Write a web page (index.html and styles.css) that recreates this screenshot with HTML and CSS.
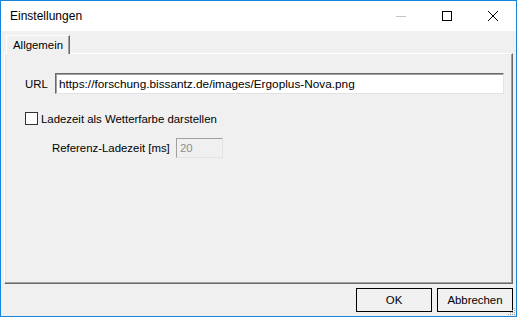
FILE: index.html
```html
<!DOCTYPE html>
<html lang="de">
  <head>
    <meta charset="UTF-8" />
    <title>Einstellungen</title>
    <link rel="stylesheet" href="styles.css">
  </head>
  <body>
    <div class="window">
      <!-- Titelleiste -->
      <div class="titlebar">
        <span class="title">Einstellungen</span>
        <div class="controls">
          <span class="ctl">
            <svg width="10" height="10" viewBox="0 0 10 10"><path d="M0 5.5h10" stroke="#c4c4c4" stroke-width="1"/></svg>
          </span>
          <span class="ctl">
            <svg width="10" height="10" viewBox="0 0 10 10"><rect x="0.5" y="0.5" width="9" height="9" fill="none" stroke="#000" stroke-width="1"/></svg>
          </span>
          <span class="ctl">
            <svg width="10" height="10" viewBox="0 0 10 10"><path d="M0 0L10 10M10 0L0 10" stroke="#000" stroke-width="1"/></svg>
          </span>
        </div>
      </div>

      <div class="content">
        <div class="tabs">
          <span class="tab">Allgemein</span>
        </div>

        <div class="panel">
          <div class="row url-row">
            <label class="lbl">URL</label>
            <input class="field url" type="text" value="https://forschung.bissantz.de/images/Ergoplus-Nova.png">
          </div>

          <div class="row check-row">
            <span class="checkbox"></span>
            <span>Ladezeit als Wetterfarbe darstellen</span>
          </div>

          <div class="row ref-row">
            <span class="lbl">Referenz-Ladezeit [ms]</span>
            <input class="field small" type="text" value="20" disabled>
          </div>
        </div>

        <div class="buttons">
          <button class="btn">OK</button>
          <button class="btn">Abbrechen</button>
        </div>
      </div>

      <svg class="grip" width="10" height="10" viewBox="0 0 10 10">
        <rect x="8" y="2" width="1" height="1" fill="#a0a0a0"/>
        <rect x="6" y="4" width="1" height="1" fill="#a0a0a0"/>
        <rect x="8" y="4" width="1" height="1" fill="#a0a0a0"/>
        <rect x="4" y="6" width="1" height="1" fill="#a0a0a0"/>
        <rect x="6" y="6" width="1" height="1" fill="#a0a0a0"/>
        <rect x="8" y="6" width="1" height="1" fill="#a0a0a0"/>
        <rect x="2" y="8" width="1" height="1" fill="#a0a0a0"/>
        <rect x="4" y="8" width="1" height="1" fill="#a0a0a0"/>
        <rect x="6" y="8" width="1" height="1" fill="#a0a0a0"/>
        <rect x="8" y="8" width="1" height="1" fill="#a0a0a0"/>
      </svg>
    </div>
  </body>
</html>
```

FILE: styles.css
```css
html,
body {
  margin: 0;
  padding: 0;
  overflow: hidden;
}

body {
  font-family: "Liberation Sans", Arial, sans-serif;
  font-size: 11.4px;
  color: #000;
}

.window {
  position: relative;
  width: 517px;
  height: 317px;
  box-sizing: border-box;
  border: 1px solid #1883d7;
  background: #f0f0f0;
  display: flex;
  flex-direction: column;
}

/* Title bar */
.titlebar {
  height: 30px;
  background: #fff;
  display: flex;
  align-items: center;
  justify-content: space-between;
}

.title {
  padding-left: 9px;
  font-size: 12px;
}

.controls {
  display: flex;
  height: 100%;
}

.ctl {
  width: 46px;
  display: flex;
  align-items: center;
  justify-content: center;
}

.ctl svg {
  display: block;
}

/* Content */
.content {
  flex: 1;
  display: flex;
  flex-direction: column;
  padding: 4px 3px 3px 3px;
}

.tabs {
  display: flex;
  padding-left: 2px;
}

.tab {
  height: 18px;
  line-height: 18px;
  padding: 0 6px 0 6px;
  border-top: 1px solid #fff;
  border-left: 1px solid #fff;
  border-right: 1px solid #696969;
  box-shadow: inset -1px 0 #a0a0a0;
  background: #f0f0f0;
  margin-bottom: -1px;
  position: relative;
  z-index: 1;
}

.panel {
  height: 231px;
  box-sizing: border-box;
  border: 1px solid;
  border-color: #fff #696969 #696969 #fff;
  box-shadow: inset -1px -1px #a0a0a0, inset 1px 0 #e3e3e3;
  padding: 19px 8px 0 20px;
  display: flex;
  flex-direction: column;
}

.row {
  display: flex;
  align-items: center;
}

.url-row {
  height: 21px;
}

.url-row .lbl {
  width: 30px;
}

.field {
  box-sizing: border-box;
  height: 21px;
  border: 1px solid;
  border-color: #696969 #e3e3e3 #e3e3e3 #696969;
  box-shadow: inset 1px 1px #a0a0a0;
  background: #fff;
  font: inherit;
  padding: 0 3px;
  outline: none;
}

.url {
  flex: 1;
  font-size: 11.8px;
}

.check-row {
  margin-top: 18px;
  height: 13px;
}

.checkbox {
  width: 13px;
  height: 13px;
  box-sizing: border-box;
  border: 1px solid #333;
  background: #fff;
  margin-right: 3px;
}

.ref-row {
  margin-top: 13px;
  padding-left: 27px;
}

.ref-row .lbl {
  width: 124px;
}

.small {
  width: 47px;
  height: 20px;
  background: #f0f0f0;
  color: #8d8d8d;
  border-color: #a0a0a0 #e3e3e3 #e3e3e3 #a0a0a0;
  box-shadow: none;
}

/* Button row */
.buttons {
  display: flex;
  justify-content: flex-end;
  gap: 5px;
  margin-top: 4px;
}

.btn {
  width: 76px;
  height: 24px;
  border: 1px solid #000;
  background: #f0f0f0;
  font: inherit;
  color: #000;
  padding: 0;
}

.grip {
  position: absolute;
  right: 0;
  bottom: 0;
}
```
